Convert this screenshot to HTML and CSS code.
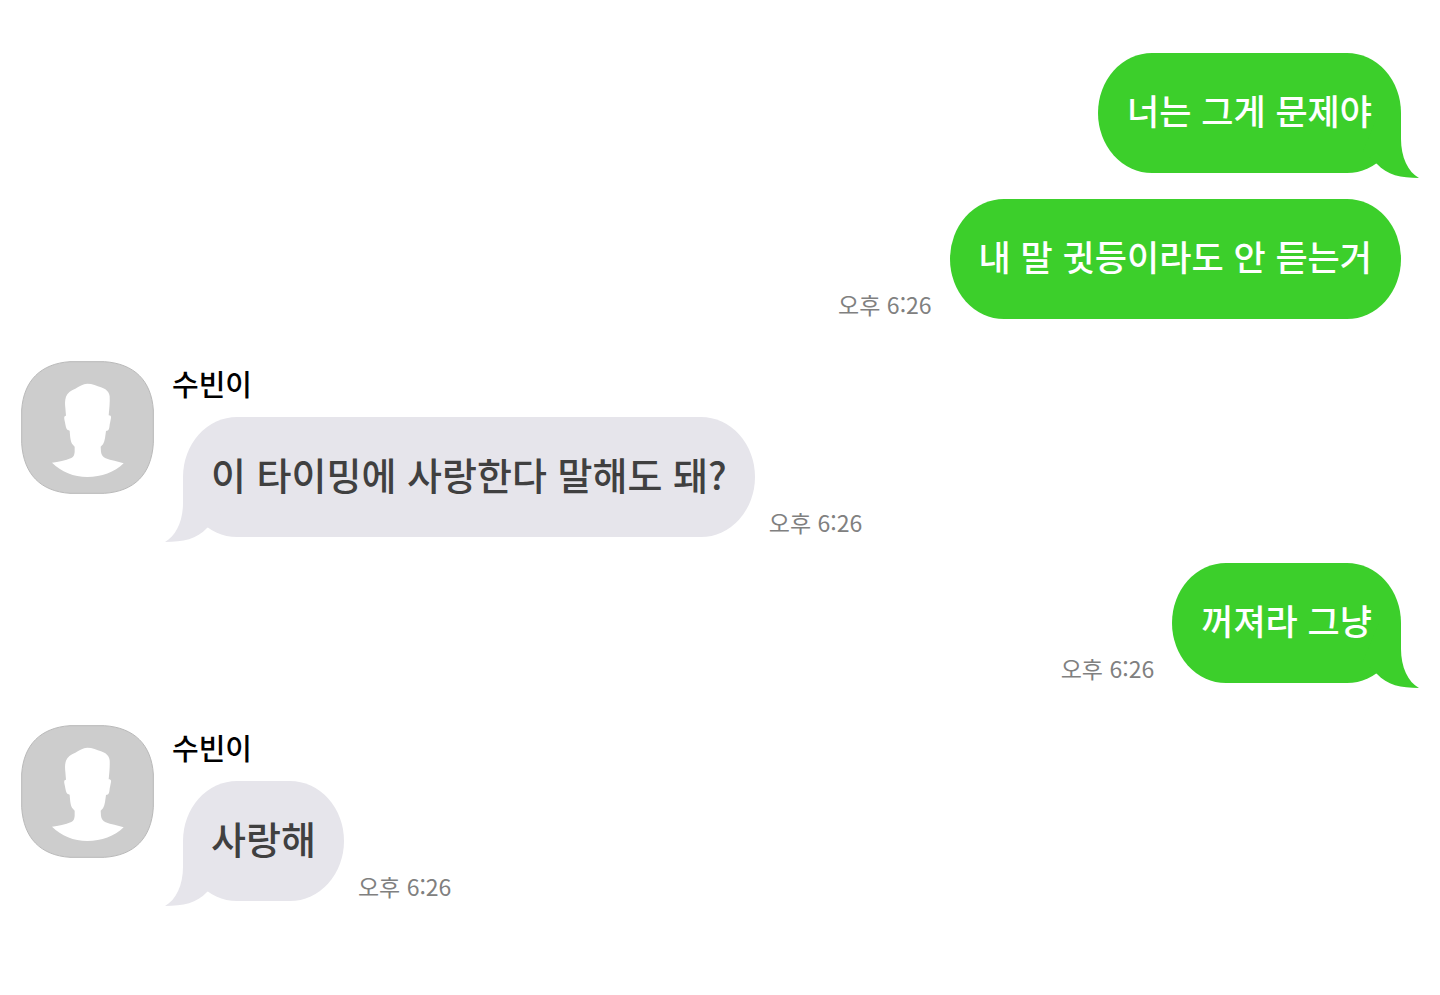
FILE: index.html
```html
<!DOCTYPE html>
<html lang="ko">
<head>
    <meta charset="UTF-8">
    <meta name="viewport" content="width=device-width, initial-scale=1.0">
    <title>수빈이</title>
    <link rel="stylesheet" href="styles.css">
</head>
<body>
    <!-- shared shapes -->
    <svg class="defs" aria-hidden="true">
        <symbol id="tail" viewBox="0 0 60 66">
            <path d="M42 0V26C42 44 49 59 60 65C42 65 28 62 18 51L4 38L20 0Z"/>
        </symbol>
        <symbol id="person" viewBox="0 0 399 399">
            <path fill="#cdcdcd" stroke="#b9b9b9" stroke-width="3" d="M147 2H250C340 8 391 59 397 147V247C391 340 340 391 250 397H147C59 391 8 340 2 247V147C8 59 59 8 147 2Z"/>
            <path fill="#fff" d="M199 68C186 69 174 75 163 83C149 88 139 96 135 107C131 119 132 130 133 140L135 164C130 164 129 168 130 175L133 190C135 201 137 208 146 209C147 222 148 240 153 248L161 257V273C160 282 158 288 151 291C133 299 112 302 93 305C121 332 158 348 199 348C242 348 280 334 308 307C290 302 270 298 254 292C246 288 241 281 240 273L239 257L246 250C252 240 253 224 255 210C264 209 265 202 266 191L270 171C271 165 268 163 263 163C265 143 267 123 266 106C264 92 255 84 240 79C228 74 214 68 199 68Z"/>
        </symbol>
    </svg>

    <main class="chat">
        <div class="message sent">
            <p class="bubble">너는 그게 문제야<svg class="tail" aria-hidden="true"><use href="#tail"/></svg></p>
        </div>

        <div class="message sent">
            <time class="time" datetime="18:26">오후 6:26</time>
            <p class="bubble">내 말 귓등이라도 안 듣는거</p>
        </div>

        <div class="message received">
            <svg class="avatar" aria-hidden="true"><use href="#person"/></svg>
            <div class="content">
                <h2 class="name">수빈이</h2>
                <div class="line">
                    <p class="bubble">이 타이밍에 사랑한다 말해도 돼?<svg class="tail" aria-hidden="true"><use href="#tail"/></svg></p>
                    <time class="time" datetime="18:26">오후 6:26</time>
                </div>
            </div>
        </div>

        <div class="message sent">
            <time class="time" datetime="18:26">오후 6:26</time>
            <p class="bubble">꺼져라 그냥<svg class="tail" aria-hidden="true"><use href="#tail"/></svg></p>
        </div>

        <div class="message received">
            <svg class="avatar" aria-hidden="true"><use href="#person"/></svg>
            <div class="content">
                <h2 class="name">수빈이</h2>
                <div class="line">
                    <p class="bubble">사랑해<svg class="tail" aria-hidden="true"><use href="#tail"/></svg></p>
                    <time class="time" datetime="18:26">오후 6:26</time>
                </div>
            </div>
        </div>
    </main>
</body>
</html>
```
FILE: styles.css
```css
* {
    box-sizing: border-box;
}
body {
    margin: 0;
    background: #fff;
    font-family: "Noto Sans CJK KR", sans-serif;
}
.defs {
    position: absolute;
    width: 0;
    height: 0;
}
.chat {
    display: flex;
    flex-direction: column;
    gap: 26px;
    padding: 53px 39px 53px 21px;
}
.message {
    display: flex;
}
.sent {
    justify-content: flex-end;
    align-items: flex-end;
    gap: 18px;
}
.received {
    align-items: flex-start;
    gap: 18px;
    margin-top: 16px;
}
.avatar {
    flex: none;
    width: 133px;
    height: 133px;
}
.name {
    margin: 0;
    padding-bottom: 12px;
    font-size: 29px;
    line-height: 44px;
    font-weight: 500;
    color: #000;
}
.line {
    display: flex;
    align-items: flex-end;
    gap: 14px;
    margin-left: 11px;
}
.bubble {
    position: relative;
    margin: 0;
    padding: 29px 29px 35px;
    border-radius: 54px / 60px;
    font-size: 35px;
    line-height: 56px;
    font-weight: 500;
}
.sent .bubble {
    background: #3ccf2b;
    color: #fff;
}
.received .bubble {
    padding-left: 28px;
    padding-right: 28px;
    background: #e6e5eb;
    color: #404040;
    font-size: 38px;
}
.tail {
    position: absolute;
    right: -18px;
    bottom: -6px;
    width: 60px;
    height: 66px;
    fill: #3ccf2b;
}
.received .tail {
    right: auto;
    left: -18px;
    fill: #e6e5eb;
    transform: scaleX(-1);
}
.time {
    flex: none;
    font-size: 23px;
    line-height: 30px;
    color: #808080;
}
```
